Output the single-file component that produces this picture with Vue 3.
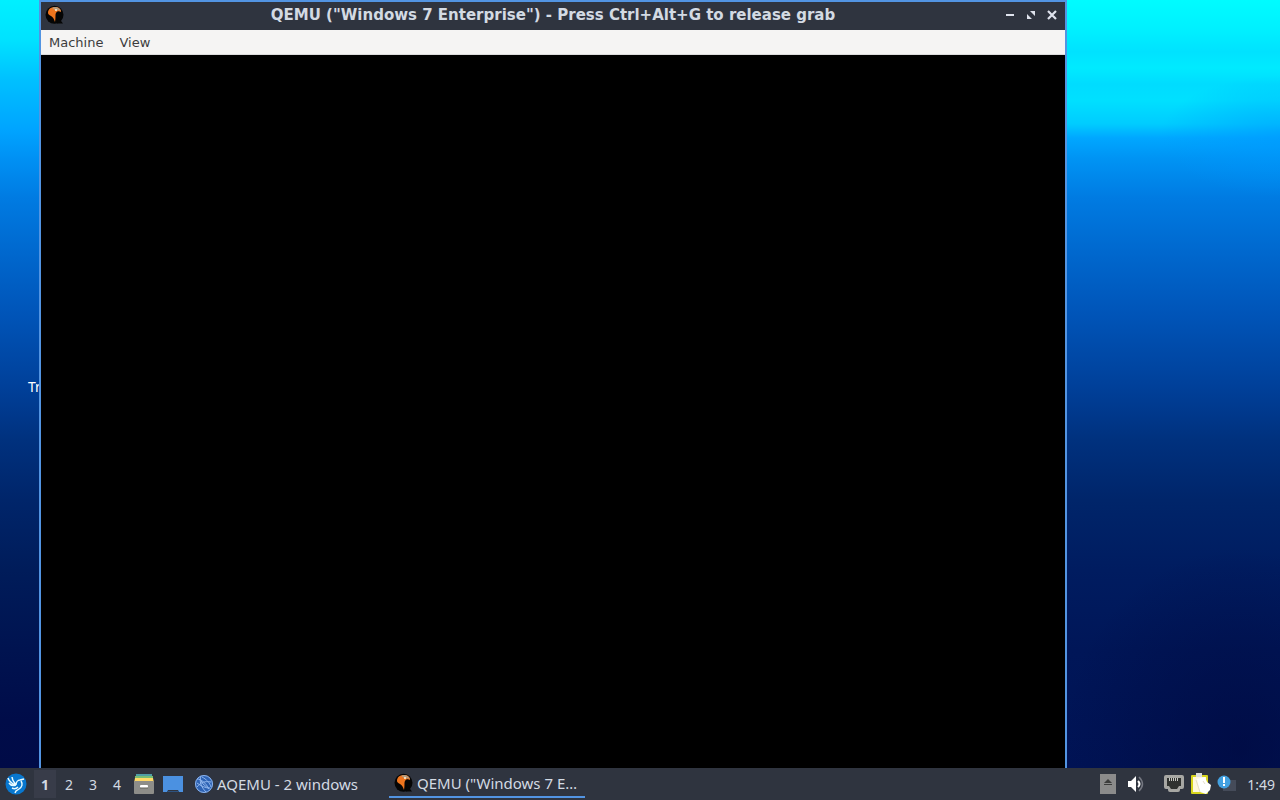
<script setup>
const workspaces = [1, 2, 3, 4]
</script>

<template>
  <div class="screen">
    <main class="desktop">
      <span class="desktop-label">Tr</span>
      <section class="window">
        <header class="titlebar">
          <svg class="app-icon" viewBox="0 0 20 20" aria-hidden="true">
            <circle cx="9.500" cy="9.800" r="9" fill="#050505" />
            <path d="M13 12l5 6.500h-6z" fill="#050505" />
            <path d="M3 8C3 4 6 2 10 2c4 0 6 2 6 5-2-1-4-1-5 1-1 2 0 4-1 9C9 14 8 12 6 11 4 10 3 9 3 8z" fill="#ee741d" />
            <path d="M7 3c3-2 7-1 9 3-2-1-4-1-5 0-1-1-2-2-4-3z" fill="#b39b7e" />
            <circle cx="11" cy="5" r="1" fill="#fff1d5" />
          </svg>
          <h1>QEMU ("Windows 7 Enterprise") - Press Ctrl+Alt+G to release grab</h1>
          <div class="controls">
            <button aria-label="Minimize"><svg viewBox="0 0 10 10"><path d="M1 5h8" stroke="#dfe3ed" stroke-width="2" /></svg></button>
            <button aria-label="Restore"><svg viewBox="0 0 10 10"><path d="M4 1h5v5zM1 4v5h5z" fill="#dfe3ed" /></svg></button>
            <button aria-label="Close"><svg viewBox="0 0 10 10"><path d="M1 1l8 8M9 1L1 9" stroke="#dfe3ed" stroke-width="2.200" /></svg></button>
          </div>
        </header>
        <nav class="menubar">
          <button>Machine</button>
          <button>View</button>
        </nav>
        <div class="display"></div>
      </section>
    </main>

    <footer class="taskbar">
      <button class="launcher" aria-label="Applications">
        <svg viewBox="0 0 22 22">
          <circle cx="11" cy="11" r="10.500" fill="#0877cf" />
          <path d="M3 5c1 3 3 5 7 7M7 4c0 3 2 5 4 8M4 10c2 3 4 3 7 2M11 12c0-3 2-5 4-5l4-1M16 8c2 3 1 6-2 8l-3 2-1 2M7 15c2 1 4 1 6-1" fill="none" stroke="#e9fbff" stroke-width="1.500" />
        </svg>
      </button>
      <div class="workspaces">
        <button v-for="n in workspaces" :key="n" :class="{ current: n === 1 }">{{ n }}</button>
      </div>
      <button class="shortcut" aria-label="File manager">
        <svg viewBox="0 0 22 22">
          <path d="M3 1h16v4H3z" fill="#4f9ea5" />
          <path d="M2 3h18v4H2z" fill="#78bd73" />
          <path d="M2 5h18l1 5H1z" fill="#ffd867" />
          <rect x="1" y="8" width="20" height="13" rx="1" fill="#8d8d89" />
          <rect x="7" y="12" width="8" height="3" rx="1" fill="#fff" />
          <path d="M7 15h8" stroke="#65645e" />
        </svg>
      </button>
      <button class="shortcut" aria-label="Show desktop">
        <svg viewBox="0 0 22 22">
          <path d="M1 3h20v16h-4l-1-2H6l-1 2H1z" fill="#4b91e1" />
          <path d="M6 18h10l1 1H5z" fill="#2d527f" />
        </svg>
      </button>
      <button class="task">
        <svg viewBox="0 0 20 20" aria-hidden="true">
          <circle cx="10" cy="10" r="9" fill="#2e63b4" />
          <g fill="none" stroke="#8fb5ec" stroke-width="1">
            <circle cx="10" cy="10" r="8.500" />
            <path d="M3 5c4 0 9 4 12 10M7 2c-2 5 0 11 5 16M3 13c4-5 8-6 14-5M8 3c4 2 8 6 9 10M3 9c4 3 8 5 13 5M6 5l3 5 6 5" />
          </g>
        </svg>
        <span>AQEMU - 2 windows</span>
      </button>
      <button class="task active">
        <svg viewBox="0 0 20 20" aria-hidden="true">
          <circle cx="9.500" cy="9.800" r="9" fill="#050505" />
          <path d="M13 12l5 6.500h-6z" fill="#050505" />
          <path d="M3 8C3 4 6 2 10 2c4 0 6 2 6 5-2-1-4-1-5 1-1 2 0 4-1 9C9 14 8 12 6 11 4 10 3 9 3 8z" fill="#ee741d" />
          <path d="M7 3c3-2 7-1 9 3-2-1-4-1-5 0-1-1-2-2-4-3z" fill="#b39b7e" />
          <circle cx="11" cy="5" r="1" fill="#fff1d5" />
        </svg>
        <span>QEMU ("Windows 7 E…</span>
      </button>
      <div class="tray">
        <button class="eject" aria-label="Removable media">
          <svg viewBox="0 0 16 20"><path d="M0 0h16v20H0z" fill="#8b8b8b" /><path d="M8 5l4 4H4zM4 10h8v1H4z" fill="#3c3d3c" /></svg>
        </button>
        <button class="volume" aria-label="Volume">
          <svg viewBox="0 0 20 20">
            <path d="M2 7h3l5-5v16l-5-5H2z" fill="#fff" />
            <path d="M12 7q3 3 0 6" fill="none" stroke="#fff" stroke-width="2" />
            <path d="M13 3q7 7 0 14" fill="none" stroke="#747781" stroke-width="1.500" />
          </svg>
        </button>
        <button class="network" aria-label="Network">
          <svg viewBox="0 0 20 18">
            <path d="M2 0h16q2 0 2 2v10q0 2-2 2h-2v1q0 2-2 2H6q-2 0-2-2v-1H2q-2 0-2-2V2q0-2 2-2z" fill="#a7a7a3" />
            <path d="M3 3h14v8h-2l-2 3H7l-2-3H3z" fill="#30322f" />
            <path d="M5.500 3v3M7.500 3v3M9.500 3v3M11.500 3v3M13.500 3v3" stroke="#c8c8c2" />
          </svg>
        </button>
        <button class="clipboard" aria-label="Clipboard">
          <svg viewBox="0 0 20 22">
            <rect x="0" y="2" width="17" height="19" rx="1" fill="#d8d51e" />
            <path d="M2 4h13v15H2z" fill="#fff8dd" />
            <path d="M5 0h6v4H5z" fill="#ddd" />
            <path d="M6 6l8-2 2 5 4 3-1 5-4 4-6-2z" fill="#fff" />
            <path d="M5 7l4 12M12 8l2 3" stroke="#e6deca" fill="none" />
          </svg>
        </button>
        <button class="notice" aria-label="Notifications">
          <svg viewBox="0 0 20 20">
            <path d="M9 6h10v11H6V9z" fill="#454b59" />
            <circle cx="7" cy="8" r="6.500" fill="#43a0e0" />
            <path d="M7 3v6M7 10v2" stroke="#fff" stroke-width="2" />
          </svg>
        </button>
        <time>1:49</time>
      </div>
    </footer>
  </div>
</template>

<style>
html, body, #app { height: 100%; }
body { margin: 0; }
</style>

<style scoped>
* { box-sizing: border-box; }
button { display: flex; align-items: center; justify-content: center; flex: none; margin: 0; padding: 0; border: 0; background: none; color: inherit; font: inherit; }
svg { display: block; flex: none; width: 100%; height: 100%; }
.screen { display: flex; flex-direction: column; height: 100%; overflow: hidden; font-family: "Noto Sans", sans-serif; }
.desktop {
  position: relative; flex: 1; min-height: 0;
  background:
    linear-gradient(180deg, #00f0ff 0, #00e2ff 40px, #00c0ff 80px, #00a4ff 130px, #0091f4 158px, #007be2 198px, #0066cc 258px, #0055b9 312px, #003f98 390px, #00317e 440px, #00256a 500px, #001c5a 570px, #001350 650px, #000c49 720px, #000b47 768px) left / 40px 100% no-repeat,
    radial-gradient(ellipse 180px 200px at right 40px bottom 20px, #00083c99, transparent) no-repeat,
    radial-gradient(ellipse 120px 60px at right 0 top 136px, #0098ff88, transparent) no-repeat,
    linear-gradient(180deg, #00fcff 0, #00f0ff 30px, #00e2ff 52px, #00eaff 68px, #00dcff 84px, #00e0ff 100px, #00ccff 124px, #00a7ff 138px, #0094f4 158px, #007be2 198px, #0066cc 258px, #0055b9 312px, #003f98 390px, #00317e 440px, #00256a 500px, #001c60 570px, #001658 650px, #001355 768px);
}
.desktop-label { position: absolute; left: 28px; top: 377px; color: #fff; font-size: 14px; line-height: 20px; }
.window { position: absolute; inset: 0 213px 0 39px; display: flex; flex-direction: column; border: 2px solid #5294e2; border-bottom: 0; background: #000; }
.titlebar { display: grid; grid-template-columns: 80px 1fr 80px; align-items: center; height: 28px; padding-bottom: 2px; background: #2f343f; color: #d3dae3; }
.app-icon { width: 20px; height: 20px; margin-left: 4px; }
h1 { margin: 0; font: bold 15px/26px "DejaVu Sans", sans-serif; text-align: center; white-space: nowrap; }
.controls { display: flex; justify-content: flex-end; gap: 11px; padding-right: 8px; }
.controls button { width: 10px; height: 10px; }
.menubar { display: flex; gap: 16px; height: 25px; padding: 1px 8px 0; border-bottom: 1px solid #dcdcdc; background: #f5f4f3; color: #3c3c3c; font: 13px/24px "DejaVu Sans", sans-serif; }
.display { flex: 1; background: #000; }
.taskbar { display: flex; align-items: center; flex: none; height: 32px; padding: 0 5px; background: #2f343f; color: #d3dae3; font-size: 14px; }
.launcher { width: 22px; height: 22px; }
.workspaces { display: flex; height: 28px; margin-left: 7px; }
.workspaces button { width: 24px; }
.workspaces .current { width: 22px; margin-right: 1px; background: #383c49; font-weight: bold; }
.shortcut { width: 22px; height: 22px; margin-left: 4px; }
.shortcut + .shortcut { margin-left: 7px; }
.task { justify-content: flex-start; gap: 3px; width: 195px; height: 28px; margin-left: 10px; font-size: 15px; white-space: nowrap; }
.task svg { width: 20px; height: 20px; }
.task.active { width: 196px; margin-left: 0; padding-left: 5px; border-bottom: 2px solid #5294e2; }
.tray { display: flex; align-items: center; margin-left: auto; }
.eject { width: 16px; height: 20px; margin-right: 10px; }
.volume { width: 20px; height: 20px; margin-right: 18px; }
.network { width: 20px; height: 18px; margin-right: 7px; }
.clipboard { width: 20px; height: 22px; margin-right: 6px; }
.notice { width: 20px; height: 20px; margin-right: 10px; }
</style>
